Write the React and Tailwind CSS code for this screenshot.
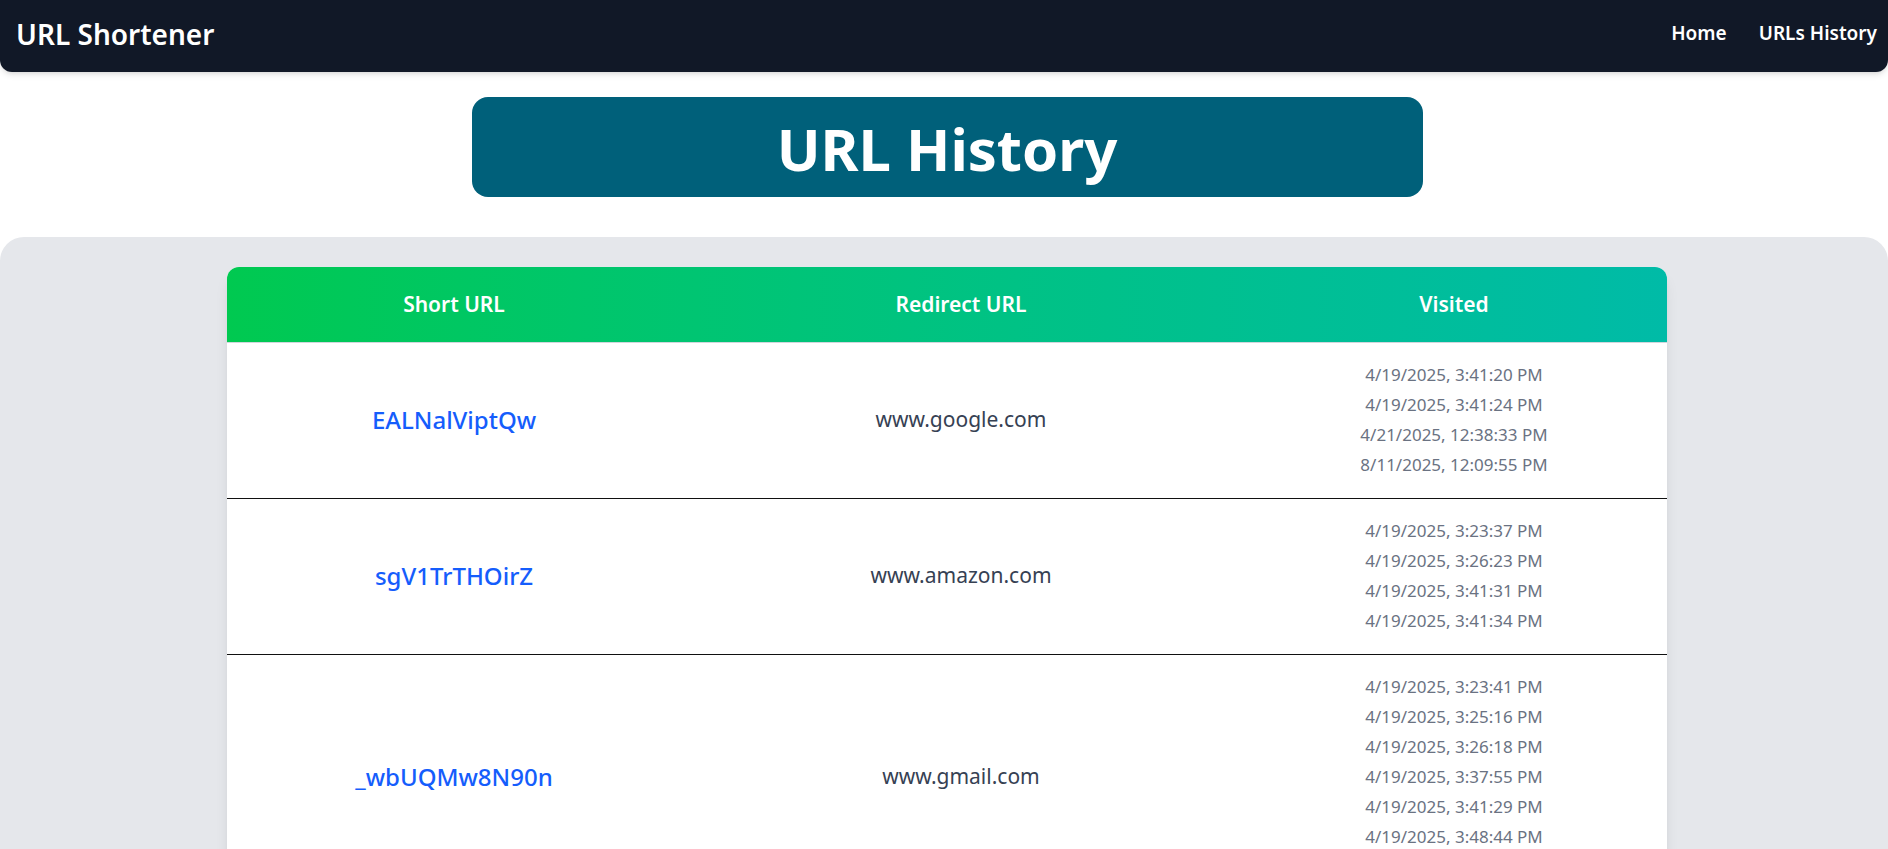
import React from 'react';

const rows = [
  {
    short: 'EALNalViptQw',
    redirect: 'www.google.com',
    visits: ['4/19/2025, 3:41:20 PM', '4/19/2025, 3:41:24 PM', '4/21/2025, 12:38:33 PM', '8/11/2025, 12:09:55 PM'],
  },
  {
    short: 'sgV1TrTHOirZ',
    redirect: 'www.amazon.com',
    visits: ['4/19/2025, 3:23:37 PM', '4/19/2025, 3:26:23 PM', '4/19/2025, 3:41:31 PM', '4/19/2025, 3:41:34 PM'],
  },
  {
    short: '_wbUQMw8N90n',
    redirect: 'www.gmail.com',
    visits: [
      '4/19/2025, 3:23:41 PM',
      '4/19/2025, 3:25:16 PM',
      '4/19/2025, 3:26:18 PM',
      '4/19/2025, 3:37:55 PM',
      '4/19/2025, 3:41:29 PM',
      '4/19/2025, 3:48:44 PM',
      '4/19/2025, 3:52:10 PM',
    ],
  },
];

const Navbar = () => (
  <nav className="h-[72px] bg-[#111827] rounded-b-xl shadow-md flex items-center justify-between pl-4 pr-[11px] pb-[5px]">
    <a className="text-[28px] font-semibold text-white">URL Shortener</a>
    <ul className="flex items-center gap-8 text-[19px] font-semibold text-white">
      <li>Home</li>
      <li>URLs History</li>
    </ul>
  </nav>
);

const App = () => {
  return (
    <div className="min-h-screen bg-white" style={{ fontFamily: '"Noto Sans", sans-serif' }}>
      <Navbar />

      <div className="flex justify-center mt-[25px] pl-[6px]">
        <div className="w-[951px] h-[100px] rounded-2xl bg-[#00607a] flex items-center justify-center">
          <h1 className="text-[58px] font-bold text-white leading-none pt-1">URL History</h1>
        </div>
      </div>

      <div className="mt-10 bg-[#e5e7eb] rounded-t-3xl pt-[30px] min-h-[620px]">
        <div className="w-[1440px] mx-auto translate-x-[3px] bg-white rounded-t-xl shadow-lg overflow-hidden">
          <div className="flex h-[76px] items-center bg-linear-to-r from-[#00c950] to-[#00bba7] border-b border-gray-300 text-white text-[21px] font-semibold">
            <div className="w-[454px] text-center">Short URL</div>
            <div className="w-[560px] text-center">Redirect URL</div>
            <div className="w-[426px] text-center">Visited</div>
          </div>

          {rows.map((row, index) => (
            <div key={index} className="flex items-center pt-5 pb-[21px] border-b border-[#111]">
              <div className="w-[454px] text-center text-[24px] font-medium text-[#155dfc]">{row.short}</div>
              <div className="w-[560px] text-center text-[21px] text-[#364153]">{row.redirect}</div>
              <div className="w-[426px] flex flex-col gap-[6px] text-center text-[17px] leading-6 text-[#6a7282]">
                {row.visits.map((v, i) => (
                  <p key={i}>{v}</p>
                ))}
              </div>
            </div>
          ))}
        </div>
      </div>
    </div>
  );
};

export default App;
